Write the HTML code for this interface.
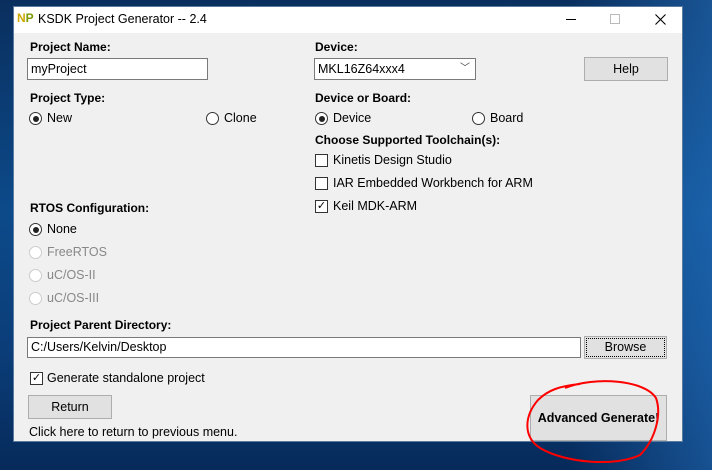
<!DOCTYPE html><html><head><style>
*{margin:0;padding:0;box-sizing:border-box}
body{width:712px;height:470px;overflow:hidden;position:relative;background:linear-gradient(90deg,rgba(0,0,0,0) 80%,rgba(40,120,200,.5) 100%),linear-gradient(180deg,#0a2f5e 0%,#0c4a8a 45%,#0b3d78 75%,#062a5a 100%);font-family:"Liberation Sans",sans-serif;font-size:12.5px;color:#000}
.a{position:absolute;white-space:nowrap}
.win{position:absolute;left:13px;top:6px;width:670px;height:436px;background:#f0f0f0;border:1px solid #5a7aa0}
.tb{position:absolute;left:0;top:0;width:100%;height:26px;background:#fff}
.b{font-weight:bold;font-size:12px}
.inp{position:absolute;background:#fff;border:1px solid #7a7a7a;padding-left:3px;line-height:20px}
.btn{position:absolute;background:#e1e1e1;border:1px solid #adadad;text-align:center}
.r{position:absolute;width:13px;height:13px;border:1px solid #333;border-radius:50%;background:#fff}
.r.on::after{content:"";position:absolute;left:2.5px;top:2.5px;width:6px;height:6px;border-radius:50%;background:#222}
.r.dis{border-color:#ccc}
.c{position:absolute;width:13px;height:13px;border:1px solid #333;background:#fff}
.g{color:#888}
</style></head><body>
<div class="win">
<div class="tb">
<div class="a" style="left:3px;top:5px;width:13px;height:13px;font-weight:bold;font-size:12px;line-height:13px;color:#c9a800">N<span style="color:#7a9a00">P</span></div>
<div class="a" style="left:24px;top:5px;font-size:12.5px">KSDK Project Generator -- 2.4</div>
<div class="a" style="left:552px;top:12px;width:10px;height:1px;background:#000"></div>
<svg class="a" style="left:641px;top:7px" width="11" height="11"><path d="M0.5 0.5L10.5 10.5M10.5 0.5L0.5 10.5" stroke="#000" stroke-width="1.1"/></svg>
<div class="a" style="left:596px;top:7px;width:10px;height:10px;border:1px solid #bbb"></div>
</div>
</div>
<div class="a b" style="left:30px;top:40px">Project Name:</div>
<div class="inp" style="left:27px;top:58px;width:181px;height:22px">myProject</div>
<div class="a b" style="left:315px;top:40px">Device:</div>
<div class="inp" style="left:314px;top:58px;width:162px;height:22px">MKL16Z64xxx4<span style="position:absolute;right:5px;top:0;font-size:10px;color:#444">﹀</span></div>
<div class="btn" style="left:584px;top:57px;width:84px;height:24px;line-height:22px">Help</div>
<div class="a b" style="left:30px;top:91px">Project Type:</div>
<div class="r on" style="left:29px;top:112px"></div><div class="a" style="left:47px;top:111px">New</div>
<div class="r" style="left:206px;top:112px"></div><div class="a" style="left:224px;top:111px">Clone</div>
<div class="a b" style="left:315px;top:91px">Device or Board:</div>
<div class="r on" style="left:315px;top:112px"></div><div class="a" style="left:333px;top:111px">Device</div>
<div class="r" style="left:472px;top:112px"></div><div class="a" style="left:490px;top:111px">Board</div>
<div class="a b" style="left:315px;top:133px">Choose Supported Toolchain(s):</div>
<div class="c" style="left:315px;top:154px"></div><div class="a" style="left:333px;top:153px">Kinetis Design Studio</div>
<div class="c" style="left:315px;top:177px"></div><div class="a" style="left:333px;top:176px">IAR Embedded Workbench for ARM</div>
<div class="c" style="left:315px;top:200px;font-size:11px;line-height:10px;text-align:center">✓</div><div class="a" style="left:333px;top:199px">Keil MDK-ARM</div>
<div class="a b" style="left:30px;top:201px">RTOS Configuration:</div>
<div class="r on" style="left:29px;top:223px"></div><div class="a" style="left:47px;top:222px">None</div>
<div class="r dis" style="left:29px;top:246px"></div><div class="a g" style="left:47px;top:245px">FreeRTOS</div>
<div class="r dis" style="left:29px;top:269px"></div><div class="a g" style="left:47px;top:268px">uC/OS-II</div>
<div class="r dis" style="left:29px;top:292px"></div><div class="a g" style="left:47px;top:291px">uC/OS-III</div>
<div class="a b" style="left:30px;top:318px">Project Parent Directory:</div>
<div class="inp" style="left:27px;top:337px;width:554px;height:21px;line-height:19px">C:/Users/Kelvin/Desktop</div>
<div class="btn" style="left:584px;top:336px;width:83px;height:23px;line-height:21px;outline:1px dotted #000;outline-offset:-3px">Browse</div>
<div class="c" style="left:30px;top:372px;font-size:11px;line-height:10px;text-align:center">✓</div><div class="a" style="left:47px;top:371px">Generate standalone project</div>
<div class="btn" style="left:28px;top:395px;width:84px;height:24px;line-height:22px">Return</div>
<div class="a" style="left:29px;top:425px">Click here to return to previous menu.</div>
<div class="btn" style="left:530px;top:395px;width:137px;height:46px;line-height:44px;font-weight:bold;font-size:12.5px">Advanced Generate!</div>
<svg class="a" style="left:0;top:0" width="712" height="470"><path d="M565 388 C595 376,645 380,656 398 C662 415,655 440,640 455 C615 467,565 463,540 448 C522 436,525 415,538 400 C548 390,560 386,580 384" fill="none" stroke="#f00" stroke-width="2"/></svg>
</body></html>
